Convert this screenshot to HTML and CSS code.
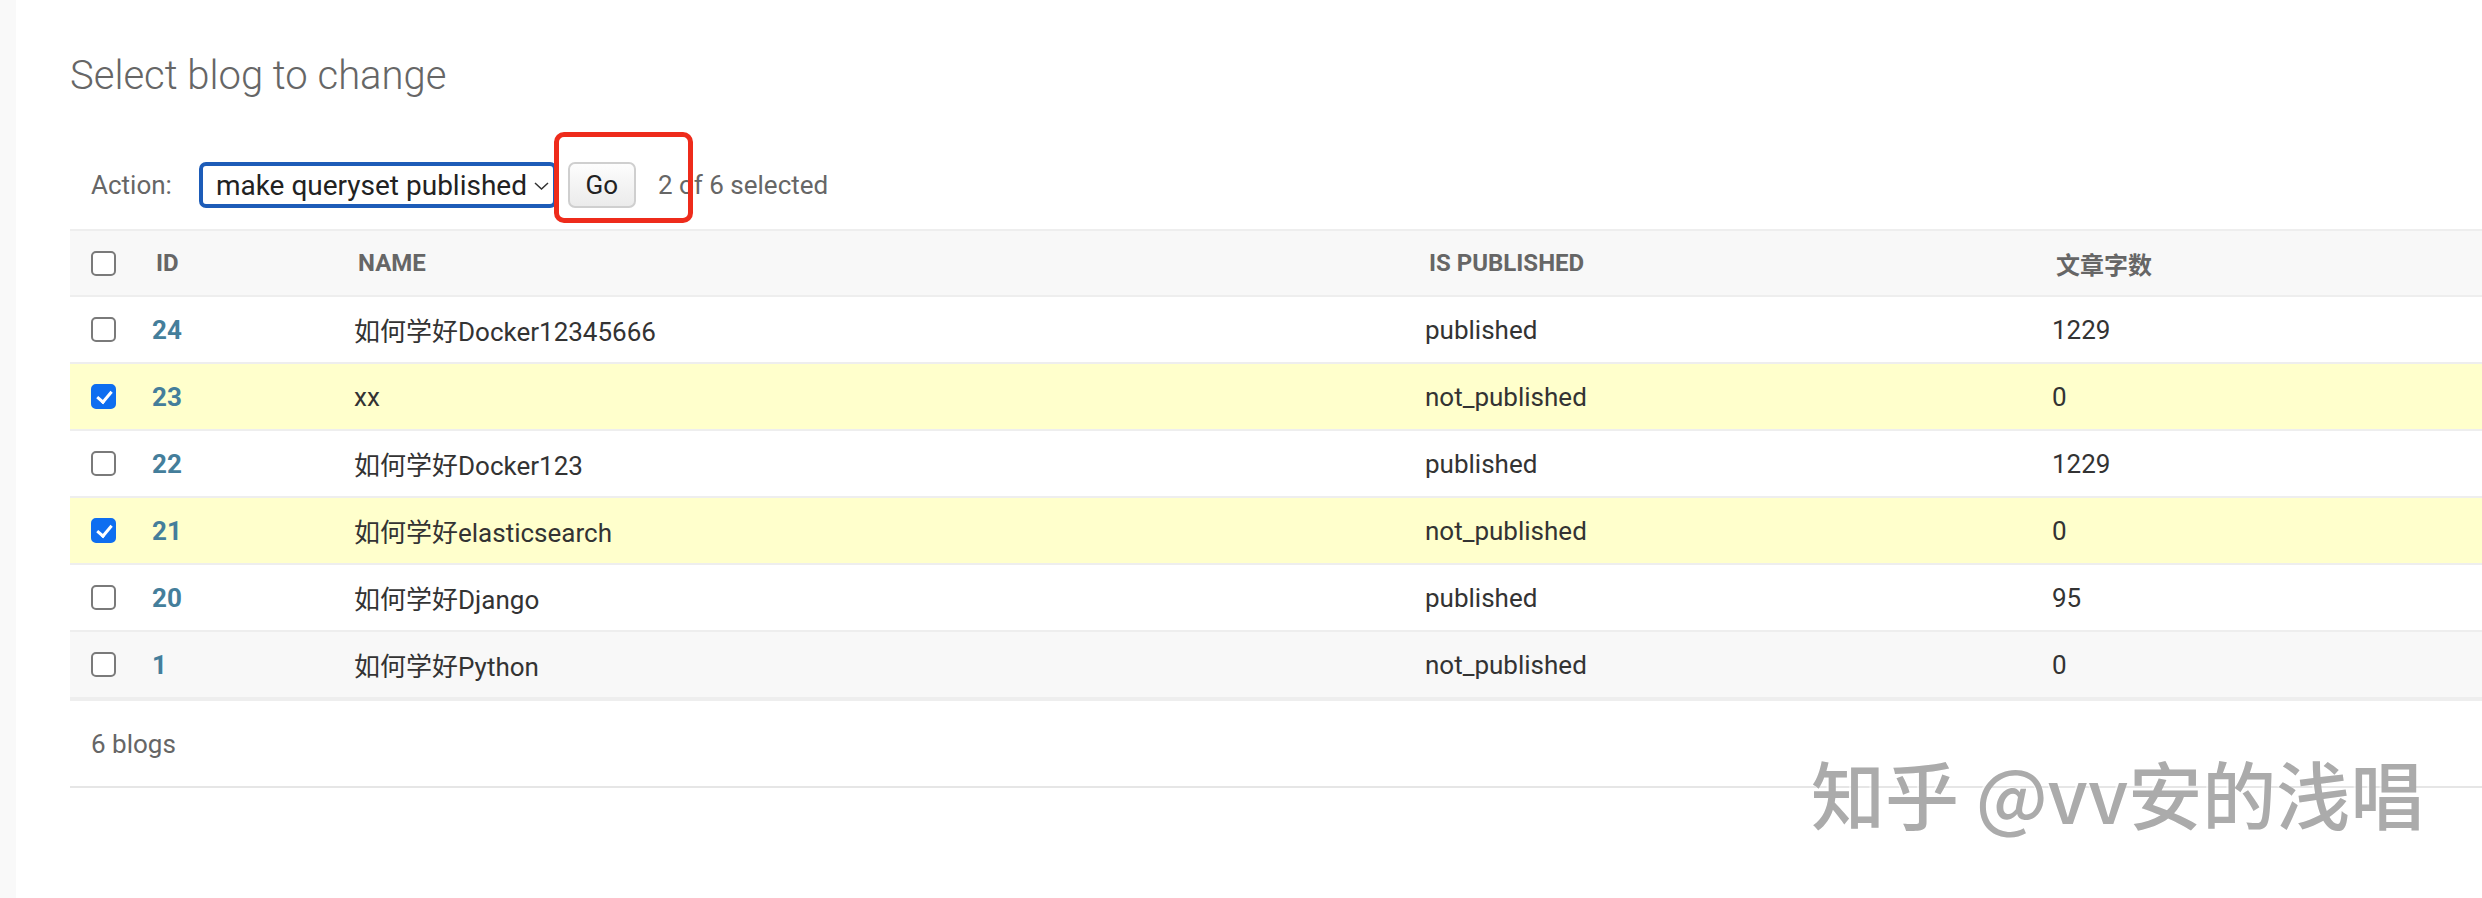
FILE: index.html
```html
<!DOCTYPE html>
<html lang="en">
<head>
  <meta charset="UTF-8">
  <title>Select blog to change</title>
  <link rel="stylesheet" href="styles.css">
</head>
<body>
  <div class="content">
    <h1>Select blog to change</h1>

    <div class="actions">
      <span class="action-label">Action:</span>
      <div class="select">
        <span>make queryset published</span>
        <svg class="chevron" width="15" height="8" viewBox="0 0 15 8"><polyline points="1,1 7.5,7 14,1" fill="none" stroke="#333" stroke-width="1.5"/></svg>
      </div>
      <button class="go">Go</button>
      <span class="counter">2 of 6 selected</span>
      <!-- annotation box -->
      <div class="mark"></div>
    </div>

    <table class="result-list">
      <colgroup>
        <col class="c-check">
        <col class="c-id">
        <col class="c-name">
        <col class="c-pub">
        <col>
      </colgroup>
      <thead>
        <tr>
          <th class="check"><input type="checkbox"></th>
          <th>ID</th>
          <th>Name</th>
          <th>Is published</th>
          <th>文章字数</th>
        </tr>
      </thead>
      <tbody>
        <tr>
          <td class="check"><input type="checkbox"></td>
          <td><a href="#">24</a></td>
          <td>如何学好Docker12345666</td>
          <td>published</td>
          <td>1229</td>
        </tr>
        <tr class="selected">
          <td class="check"><input type="checkbox" checked></td>
          <td><a href="#">23</a></td>
          <td>xx</td>
          <td>not_published</td>
          <td>0</td>
        </tr>
        <tr>
          <td class="check"><input type="checkbox"></td>
          <td><a href="#">22</a></td>
          <td>如何学好Docker123</td>
          <td>published</td>
          <td>1229</td>
        </tr>
        <tr class="selected">
          <td class="check"><input type="checkbox" checked></td>
          <td><a href="#">21</a></td>
          <td>如何学好elasticsearch</td>
          <td>not_published</td>
          <td>0</td>
        </tr>
        <tr>
          <td class="check"><input type="checkbox"></td>
          <td><a href="#">20</a></td>
          <td>如何学好Django</td>
          <td>published</td>
          <td>95</td>
        </tr>
        <tr class="hover">
          <td class="check"><input type="checkbox"></td>
          <td><a href="#">1</a></td>
          <td>如何学好Python</td>
          <td>not_published</td>
          <td>0</td>
        </tr>
      </tbody>
    </table>

    <p class="paginator">6 blogs</p>
  </div>

  <div class="watermark">知乎 @vv安的浅唱</div>
</body>
</html>
```

FILE: styles.css
```css
html, body {
  margin: 0;
  overflow: hidden;
}

body {
  position: relative;
  width: 2482px;
  height: 898px;
  font-family: Roboto, "Noto Sans CJK SC", sans-serif;
  font-size: 26px;
  color: #333;
  background: linear-gradient(to right, #f9f9f9 0, #f9f9f9 16px, #fff 16px);
}

.content {
  padding: 52px 0 0 70px;
}

h1 {
  margin: 0;
  font-size: 40px;
  line-height: 48px;
  font-weight: 300;
  color: #666;
}

/* action bar */
.actions {
  position: relative;
  display: flex;
  align-items: center;
  height: 46px;
  margin-top: 62px;
  padding-left: 21px;
}

.action-label {
  color: #666;
  margin-right: 27px;
}

.select {
  box-sizing: border-box;
  display: flex;
  align-items: center;
  justify-content: space-between;
  width: 358px;
  height: 46px;
  padding: 0 4px 0 13px;
  border: 4px solid #1d5cb8;
  border-radius: 7px;
  font-size: 28px;
  color: #222;
  background: #fff;
}

.chevron {
  margin-top: 2px;
}

.go {
  box-sizing: border-box;
  width: 68px;
  height: 46px;
  margin-left: 11px;
  padding: 0;
  font-family: inherit;
  font-size: 26px;
  color: #222;
  border: 2px solid #cfcfcf;
  border-radius: 7px;
  background: linear-gradient(#fdfdfd, #ebebeb);
}

.counter {
  margin-left: 22px;
  color: #666;
}

.mark {
  position: absolute;
  box-sizing: border-box;
  top: -30px;
  left: 484px;
  width: 139px;
  height: 91px;
  border: 5px solid #ee2b1b;
  border-radius: 10px;
}

/* result table */
.result-list {
  width: 2412px;
  margin-top: 21px;
  border-collapse: collapse;
  table-layout: fixed;
}

.c-check { width: 66px; }
.c-id { width: 202px; }
.c-name { width: 1071px; }
.c-pub { width: 627px; }

.result-list th,
.result-list td {
  padding: 0 0 0 16px;
  text-align: left;
  vertical-align: middle;
  white-space: nowrap;
}

.result-list thead th {
  height: 64px;
  padding-left: 20px;
  background: #f8f8f8;
  border-top: 2px solid #eee;
  border-bottom: 2px solid #eee;
  font-size: 24px;
  font-weight: 700;
  color: #666;
  text-transform: uppercase;
}

.result-list td {
  height: 65px;
  border-bottom: 2px solid #eee;
}

.result-list .check,
.result-list thead th.check {
  padding-left: 21px;
}

.result-list a {
  color: #447e9b;
  font-weight: 700;
  text-decoration: none;
}

tr.selected td { background: #ffc; }
tr.hover td { background: #f8f8f8; }

input[type="checkbox"] {
  appearance: none;
  -webkit-appearance: none;
  position: relative;
  display: block;
  box-sizing: border-box;
  width: 25px;
  height: 25px;
  margin: 0;
  border: 2px solid #7a7a7a;
  border-radius: 5px;
  background: #fff;
}

input[type="checkbox"]:checked {
  border-color: #0e6ef0;
  background: #0e6ef0;
}

input[type="checkbox"]:checked::after {
  content: '';
  position: absolute;
  left: 7px;
  top: 2px;
  width: 6px;
  height: 12px;
  border: solid #fff;
  border-width: 0 3px 3px 0;
  transform: rotate(40deg);
}

.paginator {
  box-sizing: border-box;
  width: 2412px;
  height: 89px;
  margin: 0;
  padding-left: 21px;
  line-height: 86px;
  color: #666;
  border-top: 2px solid #eee;
  border-bottom: 2px solid #e6e6e6;
}

/* site watermark */
.watermark {
  position: absolute;
  left: 1811px;
  top: 755px;
  font-family: "Noto Sans CJK SC", sans-serif;
  font-size: 74px;
  font-weight: 500;
  line-height: 1;
  color: #ababab;
  text-shadow: -2px -1px 0 rgba(255, 255, 255, 0.6);
  white-space: nowrap;
}
```
